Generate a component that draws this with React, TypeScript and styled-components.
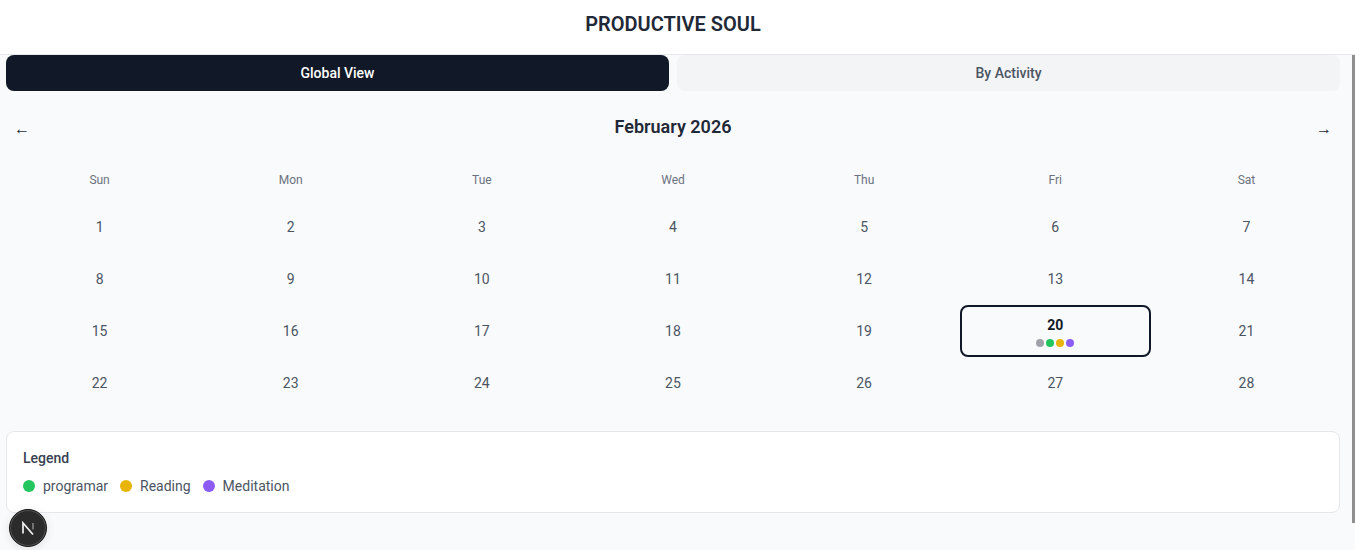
import { FC } from 'react';
import styled, { createGlobalStyle } from 'styled-components';

const GlobalStyle = createGlobalStyle`
    html, body {
        margin: 0;
        height: 100%;
        overflow: hidden;
        font-family: Roboto, "Liberation Sans", sans-serif;
        background: #fff;
    }
    #root {
        height: 100%;
    }
`;

const Page = styled.div`
    height: 100vh;
    display: flex;
    flex-direction: column;
`;

const Header = styled.header`
    height: 54px;
    flex: none;
    box-sizing: content-box;
    border-bottom: 1px solid #e5e7eb;
    background: #fff;
    padding-right: 9px;
    display: flex;
    align-items: center;
    justify-content: center;
`;

const Title = styled.h1`
    margin: 0;
    font-size: 20px;
    line-height: 28px;
    font-weight: 600;
    color: #1f2937;
    position: relative;
    top: -3px;
`;

const Main = styled.main`
    flex: 1;
    min-height: 0;
    overflow: hidden;
    background: #f9fafb;
    padding: 0 15px 0 6px;
    position: relative;
`;

const ScrollThumb = styled.div`
    position: absolute;
    top: 0;
    right: 0;
    width: 3px;
    height: 468px;
    background: #8f8f8f;
`;

const Tabs = styled.div`
    display: grid;
    grid-template-columns: 1fr 1fr;
    gap: 8px;
`;

const Tab = styled.button<{ $active?: boolean }>`
    height: 36px;
    border: 0;
    border-radius: 8px;
    padding: 0;
    font-family: inherit;
    font-size: 14px;
    font-weight: 500;
    background: ${(p) => (p.$active ? '#111827' : '#f3f4f6')};
    color: ${(p) => (p.$active ? '#fff' : '#4b5563')};
`;

const MonthBar = styled.div`
    height: 28px;
    margin-top: 22px;
    display: flex;
    align-items: center;
    justify-content: space-between;
    padding: 0 10px;
`;

const Arrow = styled.button`
    border: 0;
    padding: 0;
    width: 12px;
    background: none;
    font-family: inherit;
    font-size: 16px;
    line-height: 20px;
    color: #1f2937;
    display: flex;
    justify-content: center;
    position: relative;
    top: 2px;
`;

const Month = styled.h2`
    margin: 0;
    font-size: 18px;
    line-height: 28px;
    font-weight: 600;
    color: #1f2937;
`;

const Calendar = styled.div`
    display: grid;
    grid-template-columns: repeat(7, 1fr);
    margin: 23px -2px 0;
`;

const Weekday = styled.div`
    height: 32px;
    margin-bottom: 5px;
    display: flex;
    align-items: center;
    justify-content: center;
    font-size: 12px;
    color: #6b7280;
`;

const Day = styled.div<{ $today?: boolean }>`
    height: 52px;
    box-sizing: border-box;
    display: flex;
    flex-direction: column;
    align-items: center;
    justify-content: center;
    gap: ${(p) => (p.$today ? '4px' : '0')};
    font-size: 14px;
    line-height: 20px;
    border-radius: 8px;
    border: 2px solid ${(p) => (p.$today ? '#111827' : 'transparent')};
    color: ${(p) => (p.$today ? '#111827' : '#4b5563')};
    font-weight: ${(p) => (p.$today ? 700 : 400)};
`;

const DotRow = styled.div`
    display: flex;
    gap: 2px;
`;

const Dot = styled.span<{ $color: string; $size: number }>`
    width: ${(p) => p.$size}px;
    height: ${(p) => p.$size}px;
    border-radius: 50%;
    flex: none;
    background: ${(p) => p.$color};
`;

const Legend = styled.section`
    margin-top: 22px;
    height: 82px;
    box-sizing: border-box;
    background: #fff;
    border: 1px solid #e5e7eb;
    border-radius: 8px;
    padding: 16px;
`;

const LegendTitle = styled.h3`
    margin: 0 0 8px;
    font-size: 14px;
    line-height: 20px;
    font-weight: 500;
    color: #374151;
`;

const LegendItems = styled.div`
    display: flex;
    gap: 12px;
`;

const LegendItem = styled.div`
    display: flex;
    align-items: center;
    gap: 8px;
    font-size: 14px;
    line-height: 20px;
    color: #4b5563;
`;

const NextBadge = styled.div`
    position: fixed;
    left: 9px;
    bottom: 3px;
    width: 38px;
    height: 38px;
    box-sizing: border-box;
    border-radius: 50%;
    background: #2b2b2b;
    border: 1px solid #111;
    box-shadow: 0 0 0 1px #555 inset, 0 2px 10px rgba(0, 0, 0, 0.1);
    display: flex;
    align-items: center;
    justify-content: center;
`;

const weekdays = ['Sun', 'Mon', 'Tue', 'Wed', 'Thu', 'Fri', 'Sat'];
const days = Array.from({ length: 28 }, (_, i) => i + 1);
const activities = [
    { name: 'programar', color: '#22c55e' },
    { name: 'Reading', color: '#eab308' },
    { name: 'Meditation', color: '#8b5cf6' },
];
const todayDots = ['#a1a1aa', ...activities.map((a) => a.color)];

const App: FC = () => {
    return (
        <Page>
            <GlobalStyle />
            <Header>
                <Title>PRODUCTIVE SOUL</Title>
            </Header>
            <Main>
                <Tabs>
                    <Tab $active>Global View</Tab>
                    <Tab>By Activity</Tab>
                </Tabs>
                <MonthBar>
                    <Arrow>←</Arrow>
                    <Month>February 2026</Month>
                    <Arrow>→</Arrow>
                </MonthBar>
                <Calendar>
                    {weekdays.map((d) => (
                        <Weekday key={d}>{d}</Weekday>
                    ))}
                    {days.map((d) =>
                        d === 20 ? (
                            <Day key={d} $today>
                                {d}
                                <DotRow>
                                    {todayDots.map((c) => (
                                        <Dot key={c} $color={c} $size={8} />
                                    ))}
                                </DotRow>
                            </Day>
                        ) : (
                            <Day key={d}>{d}</Day>
                        )
                    )}
                </Calendar>
                <Legend>
                    <LegendTitle>Legend</LegendTitle>
                    <LegendItems>
                        {activities.map((a) => (
                            <LegendItem key={a.name}>
                                <Dot $color={a.color} $size={12} />
                                {a.name}
                            </LegendItem>
                        ))}
                    </LegendItems>
                </Legend>
                <ScrollThumb />
            </Main>
            <NextBadge>
                <svg width="18" height="18" viewBox="0 0 18 18" fill="none">
                    <path d="M4 14.5V4L14 15.5" stroke="#f2f2f2" strokeWidth="1.7" />
                    <path d="M14 4v6.5" stroke="#999" strokeWidth="1.3" />
                </svg>
            </NextBadge>
        </Page>
    );
};

export default App;
